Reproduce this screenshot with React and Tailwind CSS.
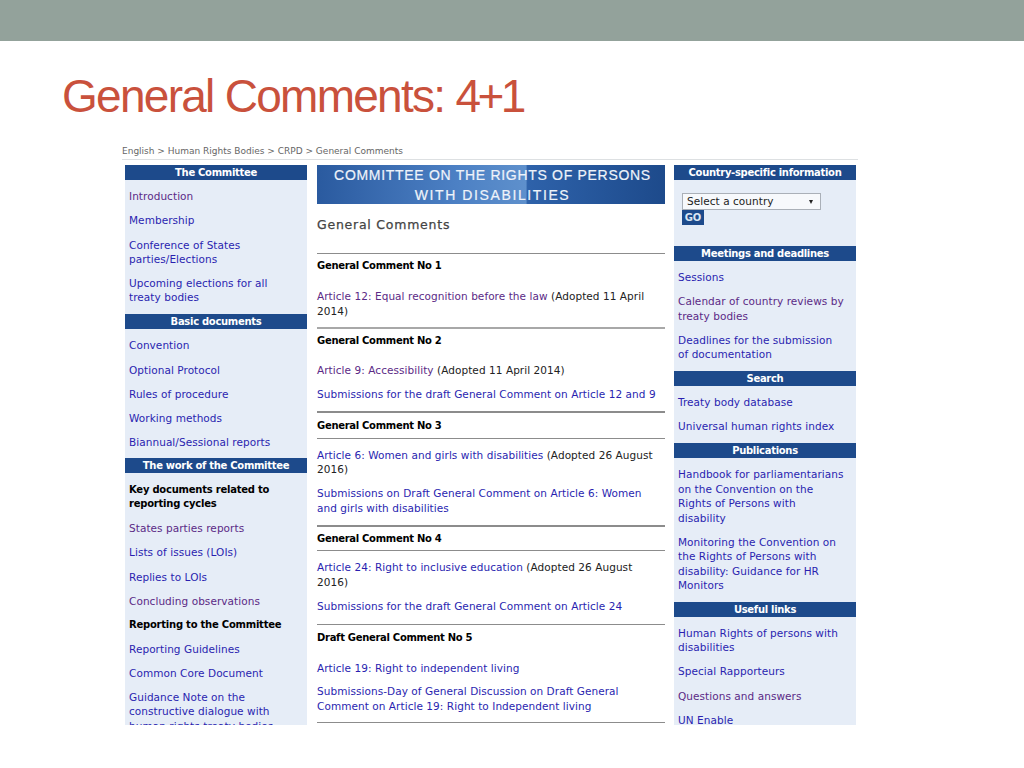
import React from "react";

const LINK = "text-[#2a1fb0]";
const VISITED = "text-[#5b2a86]";
const BOLD = "text-[10px] font-bold text-black tracking-[-0.23px]";

const leftNav = [
  { title: "The Committee", items: [
    ["Introduction", VISITED],
    ["Membership", LINK],
    ["Conference of States parties/Elections", LINK],
    ["Upcoming elections for all treaty bodies", LINK],
  ]},
  { title: "Basic documents", items: [
    ["Convention", LINK],
    ["Optional Protocol", LINK],
    ["Rules of procedure", LINK],
    ["Working methods", LINK],
    ["Biannual/Sessional reports", LINK],
  ]},
  { title: "The work of the Committee", items: [
    ["Key documents related to reporting cycles", BOLD],
    ["States parties reports", VISITED],
    ["Lists of issues (LOIs)", LINK],
    ["Replies to LOIs", LINK],
    ["Concluding observations", VISITED],
    ["Reporting to the Committee", BOLD],
    ["Reporting Guidelines", LINK],
    ["Common Core Document", LINK],
    ["Guidance Note on the constructive dialogue with human rights treaty bodies", LINK],
  ]},
];

const rightNav = [
  { title: "Meetings and deadlines", items: [
    ["Sessions", LINK],
    ["Calendar of country reviews by treaty bodies", VISITED],
    ["Deadlines for the submission of documentation", LINK],
  ]},
  { title: "Search", items: [
    ["Treaty body database", LINK],
    ["Universal human rights index", LINK],
  ]},
  { title: "Publications", items: [
    ["Handbook for parliamentarians on the Convention on the Rights of Persons with disability", LINK],
    ["Monitoring the Convention on the Rights of Persons with disability: Guidance for HR Monitors", LINK],
  ]},
  { title: "Useful links", items: [
    ["Human Rights of persons with disabilities", LINK],
    ["Special Rapporteurs", LINK],
    ["Questions and answers", VISITED],
    ["UN Enable", LINK],
  ]},
];

const NavHeader = ({ title }) => (
  <div className="h-[15px] bg-[#1d4a8b] text-center text-[10px] font-bold leading-[15px] tracking-[-0.3px] text-white">
    {title}
  </div>
);

const NavSection = ({ title, items }) => (
  <div>
    <NavHeader title={title} />
    <ul className="flex flex-col gap-[9.7px] pb-[9.2px] pl-[4px] pr-[11px] pt-[9.4px]">
      {items.map(([label, color]) => (
        <li key={label} className={color}>{label}</li>
      ))}
    </ul>
  </div>
);

const Rule = ({ className = "bg-[#8c8c8c]" }) => <div className={className} />;

const Heading = ({ children, className = "" }) => (
  <div className={`text-[10px] font-bold tracking-[-0.3px] text-black ${className}`}>{children}</div>
);

const App = () => {
  return (
    <div className="h-[768px] w-[1024px] overflow-hidden bg-white font-['DejaVu_Sans',sans-serif]">
      <div className="h-[41px] bg-[#93a29b]" />

      <h1 className="ml-[62px] mt-[27px] h-[75px] font-['Liberation_Sans',sans-serif] text-[46px] leading-[56px] tracking-[-1.72px] text-[#c9513c]">
        General Comments: <span className="tracking-[-3.6px]">4+1</span>
      </h1>

      <div className="ml-[122px] h-[582px] w-[736px] overflow-hidden text-[10.5px] leading-[14.4px] tracking-[0.06px]">
        <div className="flex h-[17px] items-center border-b border-[#dde0e2] text-[9px] tracking-[0px] text-[#666]">
          English &gt; Human Rights Bodies &gt; CRPD &gt; General Comments
        </div>

        <div className="ml-[3px] mt-[5px] flex">
          {/* left column */}
          <div className="h-[600px] w-[182px] shrink-0 bg-[#e6edf7]">
            {leftNav.map((s) => <NavSection key={s.title} {...s} />)}
          </div>

          {/* centre column */}
          <div className="ml-[10px] w-[348px] shrink-0 text-[#222]">
            <div className="flex h-[39px] flex-col items-center justify-center bg-[linear-gradient(90deg,#2a5a9f_0%,#4c80c4_40%,#5e90cc_60%,#2e62aa_60.5%,#1d4a8b_100%)] pl-[3px] font-['Liberation_Sans',sans-serif] text-[14px] leading-[20px] tracking-[0.7px] text-[#eef3fa] [-webkit-text-stroke:0.2px_#eef3fa]">
              <div>COMMITTEE ON THE RIGHTS OF PERSONS</div>
              <div className="tracking-[1.6px]">WITH DISABILITIES</div>
            </div>
            <div className="mt-[13px] text-[12.5px] leading-[16px] tracking-[0.76px] text-[#444] [-webkit-text-stroke:0.25px_#444]">General Comments</div>

            <Rule className="mt-[20px] h-px bg-[#8c8c8c]" />
            <Heading className="mt-[5px]">General Comment No 1</Heading>
            <p className="mt-[16px]"><span className={VISITED}>Article 12: Equal recognition before the law</span> (Adopted 11 April 2014)</p>

            <Rule className="mt-[9px] h-[2px] bg-[#a8a8a8]" />
            <Heading className="mt-[5px]">General Comment No 2</Heading>
            <p className="mt-[14px]"><span className={VISITED}>Article 9: Accessibility</span> (Adopted 11 April 2014)</p>
            <p className={`mt-[9.6px] ${LINK}`}>Submissions for the draft General Comment on Article 12 and 9</p>

            <Rule className="mt-[10px] h-[2px] bg-[#8c8c8c]" />
            <Heading className="mt-[6px]">General Comment No 3</Heading>
            <Rule className="mt-[5px] h-px bg-[#8c8c8c]" />
            <p className="mt-[8.5px]"><span className={LINK}>Article 6: Women and girls with disabilities</span> (Adopted 26 August 2016)</p>
            <p className={`mt-[9.4px] pr-[6px] ${LINK}`}>Submissions on Draft General Comment on Article 6: Women and girls with disabilities</p>

            <Rule className="mt-[10px] h-[2px] bg-[#8c8c8c]" />
            <Heading className="mt-[5px]">General Comment No 4</Heading>
            <Rule className="mt-[4px] h-px bg-[#8c8c8c]" />
            <p className="mt-[9px]"><span className={LINK}>Article 24: Right to inclusive education</span> (Adopted 26 August 2016)</p>
            <p className={`mt-[9.6px] ${LINK}`}>Submissions for the draft General Comment on Article 24</p>

            <Rule className="mt-[11px] h-px bg-[#8c8c8c]" />
            <Heading className="mt-[6px]">Draft General Comment No 5</Heading>
            <p className={`mt-[15px] ${LINK}`}>Article 19: Right to independent living</p>
            <p className={`mt-[9.4px] ${LINK}`}>Submissions-Day of General Discussion on Draft General Comment on Article 19: Right to Independent living</p>
            <Rule className="mt-[9px] h-px bg-[#8c8c8c]" />
          </div>

          {/* right column */}
          <div className="ml-[9px] h-[600px] w-[182px] shrink-0 bg-[#e6edf7]">
            <NavHeader title="Country-specific information" />
            <div className="h-[66px] px-[8px] pt-[13px]">
              <div className="flex h-[17px] w-[139px] items-center justify-between border border-[#aab0b8] bg-[#f7f9fc] pl-[4px] pr-[7px] text-[#222]">
                <span>Select a country</span>
                <span className="h-0 w-0 border-x-[2.5px] border-t-[4px] border-x-transparent border-t-[#222]" />
              </div>
              <div className="h-[15px] w-[22px] bg-[#1d4a8b] text-center text-[10px] font-bold leading-[15px] tracking-normal text-[#dbe5f2]">GO</div>
            </div>
            {rightNav.map((s) => <NavSection key={s.title} {...s} />)}
          </div>
        </div>
      </div>
    </div>
  );
};

export default App;
